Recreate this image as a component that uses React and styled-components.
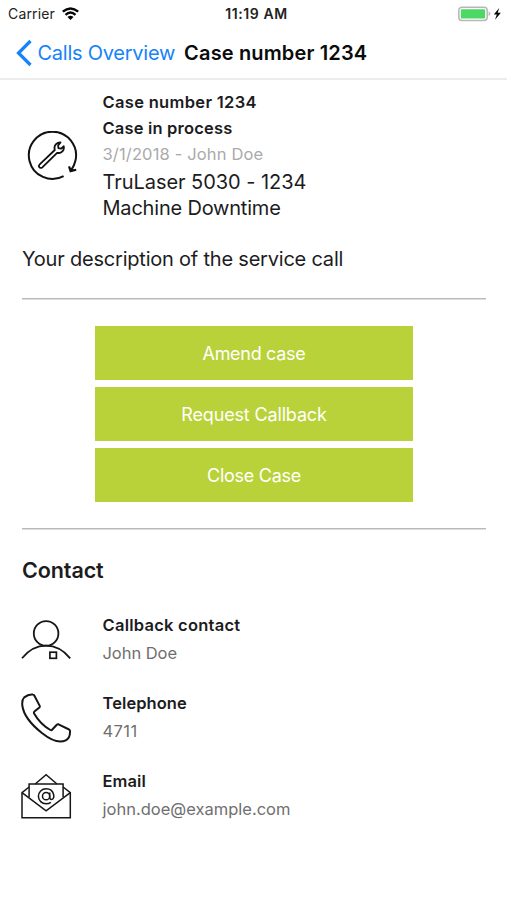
import React from 'react';
import styled, { createGlobalStyle } from 'styled-components';

const GlobalStyle = createGlobalStyle`
  *, *::before, *::after { box-sizing: border-box; }
  body { margin: 0; background: #fff; }
  svg { display: block; flex: none; }
`;

const Screen = styled.div`
  width: 507px;
  height: 900px;
  overflow: hidden;
  background: #fff;
  color: #1c1c1e;
  font-family: Inter, sans-serif;
  white-space: nowrap;
`;

const StatusBar = styled.header`
  display: grid;
  grid-template-columns: 1fr auto 1fr;
  align-items: center;
  height: 27px;
  padding: 0 5px 0 8px;
  font-size: 14px;
  color: #222;
`;

const Carrier = styled.div`
  display: flex;
  align-items: center;
  gap: 7px;
  letter-spacing: 0.15px;
`;

const Clock = styled.time`
  font-size: 14px;
  font-weight: 600;
  letter-spacing: 0.6px;
  padding-left: 3px;
`;

const Power = styled.div`
  display: flex;
  justify-content: flex-end;
`;

const NavBar = styled.nav`
  display: flex;
  align-items: center;
  height: 53px;
  padding: 1px 0 0 16px;
  border-bottom: 2px solid #ececec;
`;

const BackLink = styled.a`
  display: flex;
  align-items: center;
  gap: 4.5px;
  color: #1683f8;
  font-size: 20px;
  letter-spacing: -0.25px;
`;

const Title = styled.h1`
  margin: 0 0 0 9px;
  color: #0b0b0b;
  font-size: 20px;
  font-weight: 600;
  letter-spacing: 0.15px;
`;

const Content = styled.main`
  padding: 9px 21px 0 22px;
`;

const CaseSummary = styled.section`
  display: grid;
  grid-template-columns: 80.5px 1fr;
  height: 133px;
`;

const CaseIcon = styled.div`
  padding: 42px 0 0 4px;
`;

const Line = styled.div`
  height: ${(p) => p.$height || 26}px;
  line-height: ${(p) => p.$height || 26}px;
  font-size: ${(p) => p.$size}px;
  font-weight: ${(p) => p.$weight || 400};
  color: ${(p) => p.$color || '#1c1c1e'};
  letter-spacing: ${(p) => p.$spacing || 0}px;
`;

const Description = styled.p`
  height: 76px;
  margin: 0;
  padding-top: 24px;
  font-size: 20px;
  line-height: 26px;
  letter-spacing: -0.21px;
`;

const Divider = styled.hr`
  height: 2px;
  margin: 0;
  border: 0;
  background: linear-gradient(#b9b9b9 50%, #dedede 50%);
`;

const Actions = styled.div`
  display: flex;
  flex-direction: column;
  gap: 7.5px;
  width: 318px;
  height: 228px;
  margin-left: 73px;
  padding-top: 26px;
`;

const ActionButton = styled.button`
  height: 53.5px;
  padding: 1px 0 0;
  border: 0;
  background: #bad239;
  color: #fff;
  font: 400 18px Inter, sans-serif;
  letter-spacing: ${(p) => p.$spacing}px;
`;

const SectionTitle = styled.h2`
  height: 81px;
  margin: 0;
  padding-top: 27px;
  font-size: 21.5px;
  line-height: 26px;
  font-weight: 600;
  letter-spacing: -0.1px;
`;

const ContactRow = styled.section`
  display: grid;
  grid-template-columns: 80.5px 1fr;
  height: 78px;
`;

const ContactIcon = styled.div`
  margin-left: -2px;
  padding-top: ${(p) => p.$drop}px;
`;

const CallsChevron = () => (
  <svg width="17" height="28" viewBox="0 0 17 28" fill="none" stroke="#1683f8" strokeWidth="3.2">
    <path d="M14.5 2 2.5 14l12 12" />
  </svg>
);

const WifiIcon = () => (
  <svg width="17" height="14" viewBox="0 0 17 14" fill="none" stroke="#050505" strokeWidth="2.4">
    <path d="M.8 4.7Q8.5-1.9 16.2 4.7M3.5 7.8q5-4.4 10 0" />
    <path d="M8.5 12.9 5.5 10q3-2.5 6 0z" fill="#050505" stroke="none" />
  </svg>
);

const BatteryIcon = () => (
  <svg width="44" height="16" viewBox="0 0 44 16">
    <rect x=".8" y="1.2" width="28.4" height="13.2" rx="3.2" fill="#fff" stroke="#b7b7b7" strokeWidth="1.5" />
    <rect x="2.8" y="3.2" width="24.3" height="9.2" rx="1" fill="#4bd865" />
    <path d="M30.6 5.5q1.8.4 1.8 2.3t-1.8 2.3z" fill="#b7b7b7" />
    <path d="m41.2 2-5.4 6.5h3L37 13.7l5.9-6.9h-3.2z" fill="#080808" />
  </svg>
);

const ServiceIcon = () => (
  <svg width="52" height="52" viewBox="0 0 52 52" fill="none" stroke="#111" strokeWidth="2">
    <path d="M37.6 45.1A23.6 23.6 0 1 1 49.4 29.8Q48.3 35 44.9 39.6" />
    <path d="m43 35.4 1.6 4.7 5.6-1.3" strokeWidth="2.2" />
    <path d="m43.8 36.5 1 3.5 4-1z" fill="#111" stroke="none" />
    <path
      d="M13.7 33.3 28.8 19c-.8-3 .2-5.6 2.7-6.9 1.1-.6 2.1-.8 3-.7l-2.4 3.1.3 2.6 2.6.6 2.8-2.4c.4 2.5-.5 4.7-2.5 5.9-1.2.8-2.8 1-4.2.6L16.3 36.3c-1 .9-2.4.8-3-.1-.7-.9-.5-2 .4-2.9z"
      strokeWidth="1.8"
      strokeLinejoin="round"
    />
  </svg>
);

const PersonIcon = () => (
  <svg width="54" height="50" viewBox="0 0 54 50" fill="none" stroke="#161616" strokeWidth="1.8">
    <circle cx="26.1" cy="20.4" r="12.3" />
    <path d="M2 45.3C8.3 37.6 16.2 32.7 26 32.7S43.8 37.6 50.2 45.3" />
    <rect x="29.9" y="39.2" width="6.5" height="6.1" strokeWidth="1.7" />
  </svg>
);

const PhoneIcon = () => (
  <svg width="54" height="54" viewBox="0 0 54 54" fill="none" stroke="#161616" strokeWidth="2" strokeLinejoin="round">
    <path d="M4.2 4.4Q8.7.8 13 1.5q.8.1 1.3 1l5.4 10.4q.4.9-.3 1.6l-5 4.1q-.8.8-.3 1.8c4 7 9.4 12.5 16.3 16.6q1 .6 1.7-.2l4.7-5q.7-.9 1.7-.5l10.6 5.2q.9.5.9 1.5c.2 4.1-1.3 7.7-4.3 9.3-6 3.1-15.1-.4-23.8-7.3C12.6 32.6 3.5 22 2.3 12.5Q1.8 6.7 4.2 4.4z" />
  </svg>
);

const EmailIcon = () => (
  <svg width="54" height="50" viewBox="0 0 54 50" fill="none" stroke="#161616" strokeWidth="1.5">
    <path d="M9.1 15 2 20.7v25.1h48.3V20.7L43.1 15" />
    <path d="M9.1 25.2V12h34v13.2" />
    <path d="m15.2 12 10.9-9.2L37 12M2 20.7l24.1 18.1 24.2-18.1" />
    <circle cx="26.1" cy="24.2" r="3.6" />
    <path d="M29.7 20.5v4.6q.2 2.5 2.1 2.3c2.1-.3 2.3-2.7 1.8-4.9-.8-3.5-3.8-5.8-7.5-5.8-4.3 0-7.7 3.4-7.7 7.6s3.4 7.5 7.7 7.5q2.7 0 4.8-1.4" />
  </svg>
);

const contacts = [
  { label: 'Callback contact', value: 'John Doe', Icon: PersonIcon, drop: 2, labelSpacing: 0.25, valueSpacing: -0.05 },
  { label: 'Telephone', value: '4711', Icon: PhoneIcon, drop: 3.5, labelSpacing: 0.07, valueSpacing: 0.4 },
  { label: 'Email', value: 'john.doe@example.com', Icon: EmailIcon, drop: 4.5, labelSpacing: 0.08, valueSpacing: 0 },
];

const actions = [
  { label: 'Amend case', spacing: -0.3 },
  { label: 'Request Callback', spacing: -0.15 },
  { label: 'Close Case', spacing: -0.28 },
];

export default function App() {
  return (
    <>
      <GlobalStyle />
      <Screen>
        <StatusBar>
          <Carrier>Carrier <WifiIcon /></Carrier>
          <Clock>11:19 AM</Clock>
          <Power><BatteryIcon /></Power>
        </StatusBar>
        <NavBar>
          <BackLink><CallsChevron />Calls Overview</BackLink>
          <Title>Case number 1234</Title>
        </NavBar>
        <Content>
          <CaseSummary>
            <CaseIcon><ServiceIcon /></CaseIcon>
            <div>
              <Line $size={16.5} $weight={600} $spacing={0.32}>Case number 1234</Line>
              <Line $size={16.5} $weight={600} $spacing={0.18}>Case in process</Line>
              <Line $size={16.5} $color="#aaa" $spacing={0.15}>3/1/2018 - John Doe</Line>
              <Line $size={20} $height={30} $spacing={-0.05}>TruLaser 5030 - 1234</Line>
              <Line $size={20} $height={23} $spacing={-0.2}>Machine Downtime</Line>
            </div>
          </CaseSummary>
          <Description>Your description of the service call</Description>
          <Divider />
          <Actions>
            {actions.map(({ label, spacing }) => (
              <ActionButton key={label} $spacing={spacing}>{label}</ActionButton>
            ))}
          </Actions>
          <Divider />
          <SectionTitle>Contact</SectionTitle>
          {contacts.map(({ label, value, Icon, drop, labelSpacing, valueSpacing }) => (
            <ContactRow key={label}>
              <ContactIcon $drop={drop}><Icon /></ContactIcon>
              <div>
                <Line $size={16.5} $height={28} $weight={600} $spacing={labelSpacing}>{label}</Line>
                <Line $size={16.5} $height={28} $color="#6f6f6f" $spacing={valueSpacing}>{value}</Line>
              </div>
            </ContactRow>
          ))}
        </Content>
      </Screen>
    </>
  );
}
